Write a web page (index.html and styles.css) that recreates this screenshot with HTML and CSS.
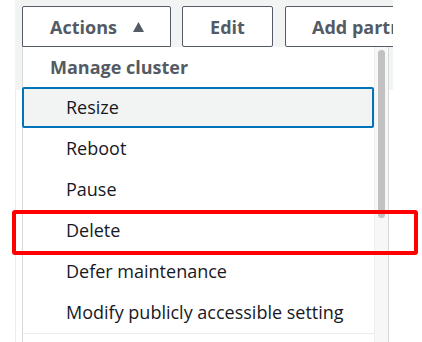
FILE: index.html
```html
<!DOCTYPE html>
<html lang="en">
<head>
    <meta charset="UTF-8" />
    <title>Cluster actions</title>
    <link rel="stylesheet" href="styles.css">
</head>
<body>
    <div class="page">
        <div class="toolbar">
            <button class="btn btn-actions">Actions
                <svg class="caret" width="11" height="10" viewBox="0 0 11 10"><polygon points="5.5,0 11,10 0,10" fill="#545b64"/></svg>
            </button>
            <button class="btn btn-edit">Edit</button>
            <button class="btn">Add partner integration</button>
        </div>
        <div class="table-area"></div>

        <div class="menu">
            <ul class="menu-list">
                <li class="menu-header">Manage cluster</li>
                <li class="menu-item active">Resize</li>
                <li class="menu-item">Reboot</li>
                <li class="menu-item">Pause</li>
                <li class="menu-item">Delete</li>
                <li class="menu-item">Defer maintenance</li>
                <li class="menu-item">Modify publicly accessible setting</li>
            </ul>
            <div class="scroll-track"><div class="scroll-thumb"></div></div>
        </div>

        <div class="highlight"></div>
    </div>
</body>
</html>
```

FILE: styles.css
```css
body {
    margin: 0;
    padding: 0;
    background: #fff;
    font-family: 'Open Sans', 'Noto Sans', sans-serif;
    font-size: 18px;
    overflow: hidden;
}

.page {
    position: relative;
    width: 422px;
    height: 342px;
}

.toolbar {
    margin-left: 15px;
    width: 378px;
    height: 90px;
    background-color: #f2f3f3;
    padding: 6px 0 0 7px;
    box-sizing: border-box;
    display: flex;
    align-items: flex-start;
    gap: 11px;
    overflow: hidden;
}

.btn {
    flex-shrink: 0;
    height: 41px;
    padding: 0 26px;
    background: #fff;
    border: 1px solid #545b64;
    border-radius: 2px;
    color: #545b64;
    font-family: 'Open Sans', 'Noto Sans', sans-serif;
    font-size: 18px;
    font-weight: 700;
    display: flex;
    align-items: center;
    gap: 16px;
    white-space: nowrap;
}

.btn-actions {
    width: 149px;
    padding-left: 27px;
    border-bottom-left-radius: 0;
    border-bottom-right-radius: 0;
}

.btn-edit {
    width: 91px;
    justify-content: center;
    padding: 0;
    margin-right: 1px;
}

.table-area {
    margin-left: 15px;
    height: 252px;
    border-left: 1px solid #eaeded;
}

.menu {
    position: absolute;
    left: 22px;
    top: 47px;
    width: 367px;
    height: 310px;
    box-sizing: border-box;
    background: #fff;
    border: 1px solid #d5dbdb;
    border-top: none;
    display: flex;
}

.menu-list {
    list-style: none;
    margin: 0;
    padding: 0;
    flex: 1;
    align-self: flex-start;
    border-bottom: 1px solid #eaeded;
}

.menu-header {
    height: 40px;
    line-height: 40px;
    padding-left: 27px;
    color: #545b64;
    font-weight: 700;
}

.menu-item {
    height: 41px;
    line-height: 41px;
    padding-left: 43px;
    color: #16191f;
}

.menu-item.active {
    background-color: #f2f3f3;
    box-shadow: inset 0 0 0 2px #0073bb;
    margin-left: -1px;
    padding-left: 44px;
    border-radius: 2px;
}

.scroll-track {
    width: 13px;
    background: #f7f7f7;
    border-left: 1px solid #eeeeee;
}

.scroll-thumb {
    width: 7px;
    height: 168px;
    margin: 3px 0 0 3px;
    border-radius: 4px;
    background: #c1c1c1;
}

.highlight {
    position: absolute;
    left: 12px;
    top: 210px;
    width: 406px;
    height: 45px;
    box-sizing: border-box;
    border: 4px solid #ff0000;
    border-radius: 3px;
}
```
